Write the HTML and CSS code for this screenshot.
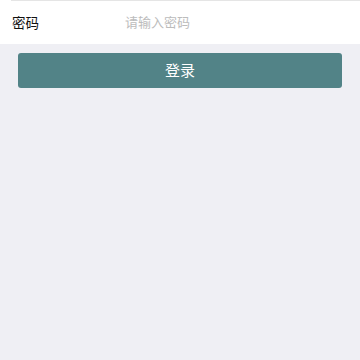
FILE: index.html
```html
<!DOCTYPE html>
<html lang="zh-CN">
<head>
    <meta charset="UTF-8">
    <meta name="viewport" content="width=device-width, initial-scale=1.0">
    <title>登录</title>
    <link rel="stylesheet" href="styles.css">
</head>
<body>
    <div class="cell">
        <div class="cell-inner">
            <label class="cell-label" for="pwd">密码</label>
            <input class="cell-input" id="pwd" type="password" placeholder="请输入密码">
        </div>
    </div>
    <div class="btn-area">
        <button class="btn-login" type="button">登录</button>
    </div>
</body>
</html>
```

FILE: styles.css
```css
body {
    margin: 0;
    background-color: #efeff4;
    font-family: "Noto Sans CJK SC", "Noto Sans", sans-serif;
    color: #000;
}
.cell {
    background-color: #fff;
    padding-left: 11px;
}
.cell-inner {
    display: flex;
    align-items: center;
    height: 41px;
    padding: 0 0 2px 1px;
    border-top: 1px solid #e5e5e5;
}
.cell-label {
    width: 113px;
    font-size: 13.5px;
    line-height: 20px;
    color: #111;
}
.cell-input {
    flex: 1;
    border: none;
    outline: none;
    padding: 0;
    font-size: 13px;
    line-height: 20px;
    font-family: inherit;
    background: transparent;
}
.cell-input::placeholder {
    color: #bcbcbc;
}
.btn-area {
    padding: 9px 18px 0;
}
.btn-login {
    display: block;
    width: 100%;
    height: 35px;
    padding: 0 0 2px;
    border: none;
    border-radius: 3px;
    background-color: #528387;
    color: #fff;
    font-size: 15px;
    font-family: inherit;
}
```
